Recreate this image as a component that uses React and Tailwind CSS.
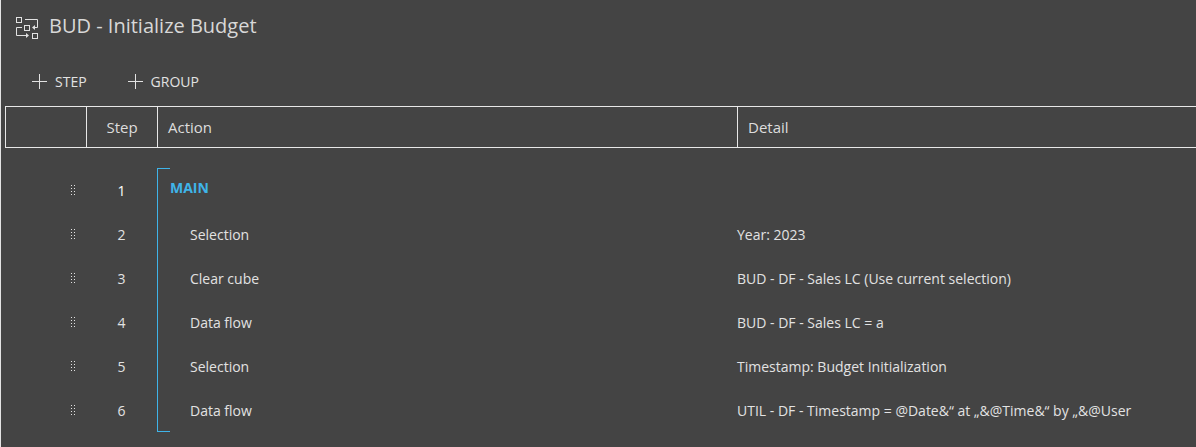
import React from "react";

const steps = [
  { id: 1, action: "MAIN", detail: "", group: true },
  { id: 2, action: "Selection", detail: "Year: 2023" },
  { id: 3, action: "Clear cube", detail: "BUD - DF - Sales LC (Use current selection)" },
  { id: 4, action: "Data flow", detail: "BUD - DF - Sales LC = a" },
  { id: 5, action: "Selection", detail: "Timestamp: Budget Initialization" },
  { id: 6, action: "Data flow", detail: "UTIL - DF - Timestamp = @Date&“ at „&@Time&“ by „&@User" },
];

const ProcessIcon = () => (
  <svg width="23" height="23" viewBox="0 0 23 23" fill="none" stroke="currentColor" aria-hidden="true">
    <rect x="1.5" y="0.5" width="5" height="5" />
    <rect x="9.5" y="8.5" width="5" height="5" />
    <rect x="17.5" y="16.5" width="5" height="5" />
    <path d="M10 2.5H22.5V10.5H18" />
    <path d="M7 10.5H1.5V18.5H12" />
    <path d="M20 8L17 10.5L20 13Z" fill="currentColor" stroke="none" />
    <path d="M11 16L14 18.5L11 21Z" fill="currentColor" stroke="none" />
  </svg>
);

const PlusIcon = () => (
  <svg width="15" height="15" viewBox="0 0 15 15" stroke="currentColor" aria-hidden="true">
    <path d="M7.5 0V15M0 7.5H15" />
  </svg>
);

const DragHandle = () => (
  <svg width="4" height="11" viewBox="0 0 4 11" fill="currentColor" aria-hidden="true">
    {[0, 3, 6, 9].map((y) => (
      <React.Fragment key={y}>
        <rect x="0" y={y} width="1" height="1" />
        <rect x="3" y={y} width="1" height="1" />
      </React.Fragment>
    ))}
  </svg>
);

const ToolbarButton = ({ label }) => (
  <button type="button" className="flex items-center gap-2 text-sm hover:text-white">
    <PlusIcon />
    {label}
  </button>
);

const StepRow = ({ step, last }) => (
  <tr className="h-11">
    <td className="pr-[11px]">
      <button type="button" aria-label={`Move step ${step.id}`} className="flex ml-auto cursor-grab">
        <DragHandle />
      </button>
    </td>
    <td className={`pt-0.5 text-center ${step.group ? "text-white" : ""}`}>{step.id}</td>
    <td className="relative border-l border-[#3fb4e9] pt-0.5">
      {step.group && <span className="absolute top-0 left-0 w-3 border-t border-[#3fb4e9]" />}
      {last && <span className="absolute bottom-0 left-0 w-3 border-t border-[#3fb4e9]" />}
      {step.group ? (
        <div className="pl-3 pb-1.5 font-bold text-[#3fb4e9]">{step.action}</div>
      ) : (
        <div className="pl-8">{step.action}</div>
      )}
    </td>
    <td className="pt-0.5">{step.detail}</td>
  </tr>
);

const App = () => {
  return (
    <main className="min-h-screen bg-[#444444] border-l border-[#e4e4e4] text-[#e2e2e2] font-['Open_Sans',sans-serif]">
      <header className="flex items-center gap-[11px] h-[53px] pl-3.5 pt-1">
        <ProcessIcon />
        <h1 className="pb-1.5 text-xl text-[#d8d8d8]">BUD - Initialize Budget</h1>
      </header>

      <div className="flex items-center gap-[41px] h-[53px] pl-[31px] pt-1">
        <ToolbarButton label="STEP" />
        <ToolbarButton label="GROUP" />
      </div>

      <div className="pl-1">
        <table className="w-full table-fixed border-separate border-spacing-0 text-sm">
          <colgroup>
            <col className="w-[81px]" />
            <col className="w-[71px]" />
            <col className="w-[580px]" />
            <col />
          </colgroup>
          <thead>
            <tr className="h-[42px] text-[15px] text-[#dddddd]">
              <th className="border-y border-l border-[#e8e8e8]" aria-label="Move"></th>
              <th className="border-y border-l border-[#e8e8e8] pt-0.5 font-normal">Step</th>
              <th className="border-y border-l border-[#e8e8e8] pt-0.5 pl-2.5 text-left font-normal">Action</th>
              <th className="border-y border-l border-[#e8e8e8] pt-0.5 pl-2.5 text-left font-normal">Detail</th>
            </tr>
          </thead>
          <tbody>
            <tr className="h-5" aria-hidden="true">
              <td colSpan={4}></td>
            </tr>
            {steps.map((step, i) => (
              <StepRow key={step.id} step={step} last={i === steps.length - 1} />
            ))}
          </tbody>
        </table>
      </div>
    </main>
  );
};

export default App;
